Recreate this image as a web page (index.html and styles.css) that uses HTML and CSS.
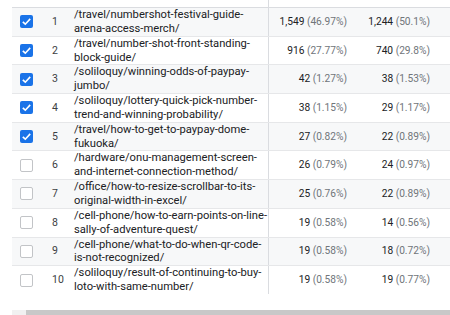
FILE: index.html
```html
<!DOCTYPE html>
<html>
<head>
<meta charset="utf-8">
<link rel="stylesheet" href="styles.css">
</head>
<body>
<div class="wrap">
<table class="tbl">
  <colgroup>
    <col class="c-chk"><col class="c-rank"><col class="c-path"><col class="c-v1"><col class="c-v2">
  </colgroup>
  <tr class="head"><td></td><td></td><td></td><td class="sep"></td><td></td></tr>
  <tr class="odd"><td class="chk"><span class="box on"><svg viewBox="0 0 13 13"><path d="M2.8 6.8 L5.3 9.2 L10.2 3.9" /></svg></span></td><td class="rank">1</td><td class="path">/travel/numbershot-festival-guide-<br>arena-access-merch/</td><td class="val sep"><b>1,549</b> <i>(46.97%)</i></td><td class="val v2"><b>1,244</b> <i>(50.1%)</i></td></tr>
  <tr><td class="chk"><span class="box on"><svg viewBox="0 0 13 13"><path d="M2.8 6.8 L5.3 9.2 L10.2 3.9" /></svg></span></td><td class="rank">2</td><td class="path">/travel/number-shot-front-standing-<br>block-guide/</td><td class="val sep"><b>916</b> <i>(27.77%)</i></td><td class="val v2"><b>740</b> <i>(29.8%)</i></td></tr>
  <tr class="odd"><td class="chk"><span class="box on"><svg viewBox="0 0 13 13"><path d="M2.8 6.8 L5.3 9.2 L10.2 3.9" /></svg></span></td><td class="rank">3</td><td class="path">/soliloquy/winning-odds-of-paypay-<br>jumbo/</td><td class="val sep"><b>42</b> <i>(1.27%)</i></td><td class="val v2"><b>38</b> <i>(1.53%)</i></td></tr>
  <tr><td class="chk"><span class="box on"><svg viewBox="0 0 13 13"><path d="M2.8 6.8 L5.3 9.2 L10.2 3.9" /></svg></span></td><td class="rank">4</td><td class="path">/soliloquy/lottery-quick-pick-number-<br>trend-and-winning-probability/</td><td class="val sep"><b>38</b> <i>(1.15%)</i></td><td class="val v2"><b>29</b> <i>(1.17%)</i></td></tr>
  <tr class="odd"><td class="chk"><span class="box on"><svg viewBox="0 0 13 13"><path d="M2.8 6.8 L5.3 9.2 L10.2 3.9" /></svg></span></td><td class="rank">5</td><td class="path">/travel/how-to-get-to-paypay-dome-<br>fukuoka/</td><td class="val sep"><b>27</b> <i>(0.82%)</i></td><td class="val v2"><b>22</b> <i>(0.89%)</i></td></tr>
  <tr><td class="chk"><span class="box"></span></td><td class="rank">6</td><td class="path">/hardware/onu-management-screen-<br>and-internet-connection-method/</td><td class="val sep"><b>26</b> <i>(0.79%)</i></td><td class="val v2"><b>24</b> <i>(0.97%)</i></td></tr>
  <tr class="odd"><td class="chk"><span class="box"></span></td><td class="rank">7</td><td class="path">/office/how-to-resize-scrollbar-to-its-<br>original-width-in-excel/</td><td class="val sep"><b>25</b> <i>(0.76%)</i></td><td class="val v2"><b>22</b> <i>(0.89%)</i></td></tr>
  <tr><td class="chk"><span class="box"></span></td><td class="rank">8</td><td class="path">/cell-phone/how-to-earn-points-on-line-<br>sally-of-adventure-quest/</td><td class="val sep"><b>19</b> <i>(0.58%)</i></td><td class="val v2"><b>14</b> <i>(0.56%)</i></td></tr>
  <tr class="odd"><td class="chk"><span class="box"></span></td><td class="rank">9</td><td class="path">/cell-phone/what-to-do-when-qr-code-<br>is-not-recognized/</td><td class="val sep"><b>19</b> <i>(0.58%)</i></td><td class="val v2"><b>18</b> <i>(0.72%)</i></td></tr>
  <tr class="last"><td class="chk"><span class="box"></span></td><td class="rank">10</td><td class="path">/soliloquy/result-of-continuing-to-buy-<br>loto-with-same-number/</td><td class="val sep"><b>19</b> <i>(0.58%)</i></td><td class="val v2"><b>19</b> <i>(0.77%)</i></td></tr>
</table>
<div class="scroll"><span class="arrow"></span><span class="thumb"></span></div>
</div>
</body>
</html>
```

FILE: styles.css
```css
html, body {
  margin: 0;
  padding: 0;
  background: #ffffff;
}
.wrap {
  padding-left: 12px;
  font-family: Roboto, "Liberation Sans", sans-serif;
  font-size: 11.2px;
  color: #202124;
}
.tbl {
  border-collapse: collapse;
  table-layout: fixed;
  width: 438px;
}
.c-chk { width: 40px; }
.c-rank { width: 22px; }
.c-path { width: 194px; }
.c-v1 { width: 82px; }
.c-v2 { width: 100px; }
.tbl td {
  padding: 0;
  border-bottom: 1px solid #e6e7e9;
  line-height: 13.85px;
  vertical-align: middle;
}
.tbl tr.head td {
  height: 7px;
  border-bottom: 1px solid #dadce0;
}
.tbl tr.last td {
  border-bottom: none;
}
.tbl tr.odd td {
  background: #f7f8f9;
}
.tbl td.sep {
  border-left: 1px solid #dadce0;
}
.chk {
  padding-left: 8px !important;
}
.box {
  display: block;
  width: 13px;
  height: 13px;
  box-sizing: border-box;
  border: 1.6px solid #c2c4c7;
  border-radius: 2px;
  background: #fff;
}
.box.on {
  border: none;
  background: #1a73e8;
}
.box svg {
  display: block;
  width: 13px;
  height: 13px;
}
.box svg path {
  fill: none;
  stroke: #ffffff;
  stroke-width: 1.6;
}
.rank {
  color: #3c4043;
  font-size: 10.5px;
}
.path {
  color: #202124;
  white-space: nowrap;
}
.val {
  text-align: right;
  padding-right: 3px !important;
  white-space: nowrap;
  font-size: 10.2px;
}
.val.v2 {
  padding-right: 20px !important;
}
.val b {
  font-weight: 400;
  color: #202124;
}
.val i {
  font-style: normal;
  color: #70757a;
}
.scroll {
  margin-top: 16px;
  display: flex;
  height: 10px;
}
.arrow {
  width: 14px;
  background: #f1f1f1;
}
.thumb {
  flex: 1;
  background: #c8c8c8;
}
```
